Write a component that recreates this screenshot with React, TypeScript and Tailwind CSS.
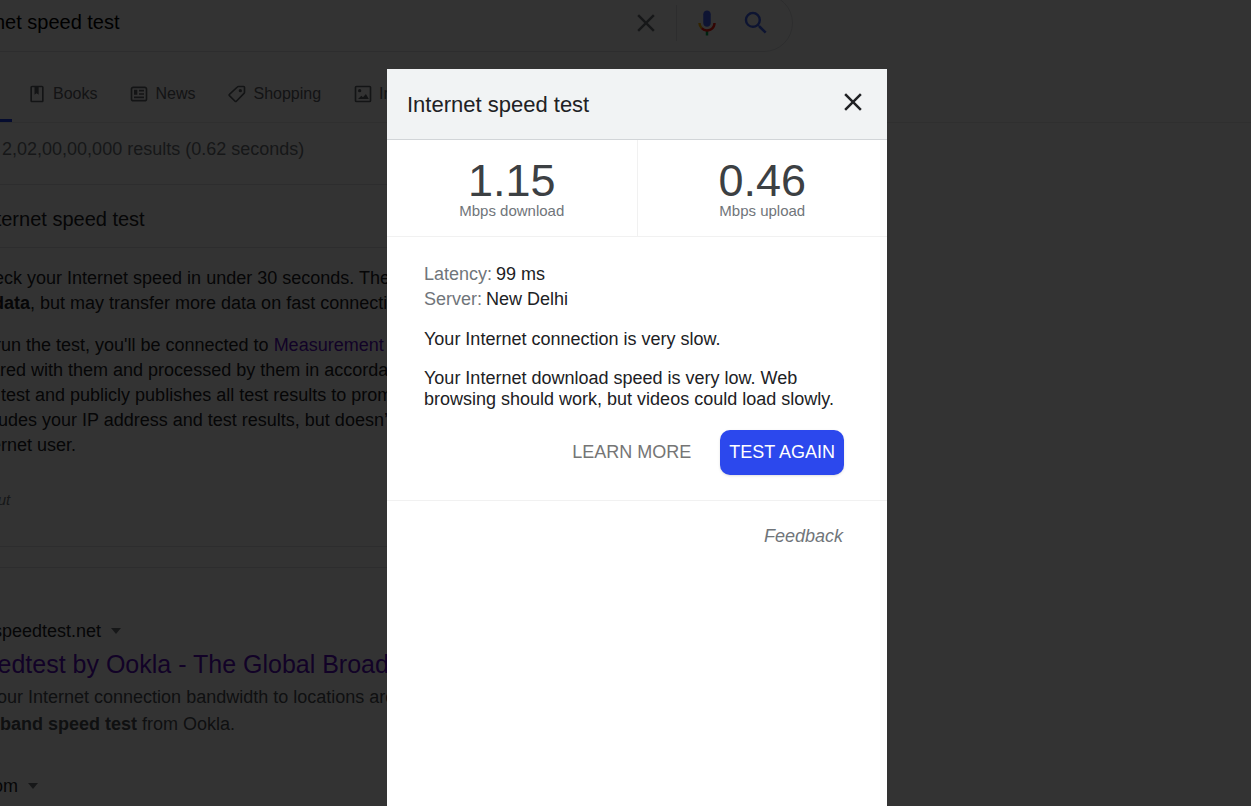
import React from 'react';

type IconProps = { className?: string };

const BookIcon = ({ className }: IconProps) => (
  <svg viewBox="0 0 24 24" fill="currentColor" className={className} aria-hidden="true">
    <path d="M18 2H6c-1.100 0-2 .9-2 2v16c0 1.100.9 2 2 2h12c1.100 0 2-.9 2-2V4c0-1.100-.9-2-2-2zm0 18H6V4h3v9l2.500-1.900L14 13V4h4v16z" />
  </svg>
);

const NewsIcon = ({ className }: IconProps) => (
  <svg viewBox="0 0 24 24" fill="currentColor" className={className} aria-hidden="true">
    <path d="M12 11h6v2h-6v-2zm-6 6h12v-2H6v2zm0-4h4V7H6v6zm16-7.220v12.440c0 1.540-1.340 2.780-3 2.780H5c-1.640 0-3-1.250-3-2.780V5.780C2 4.260 3.360 3 5 3h14c1.640 0 3 1.250 3 2.780zM19.990 12V5.780c0-.42-.46-.78-1-.78H5c-.54 0-1 .36-1 .78v12.440c0 .42.46.78 1 .78h14c.54 0 1-.36 1-.78V12zM12 9h6V7h-6v2z" />
  </svg>
);

const TagIcon = ({ className }: IconProps) => (
  <svg viewBox="0 0 24 24" fill="none" stroke="currentColor" strokeWidth="2" className={className} aria-hidden="true">
    <path d="M20 3h-6.200a2 2 0 0 0-1.400.600L2.900 12.400a1 1 0 0 0 0 1.500l6.800 6.800a1 1 0 0 0 1.500 0l9.200-9.500a2 2 0 0 0 .6-1.400V4a1 1 0 0 0-1-1z" />
    <circle cx="16" cy="8" r="2" fill="currentColor" stroke="none" />
  </svg>
);

const ImageIcon = ({ className }: IconProps) => (
  <svg viewBox="0 0 24 24" fill="currentColor" className={className} aria-hidden="true">
    <path d="M20 2H4a2 2 0 0 0-2 2v16a2 2 0 0 0 2 2h16a2 2 0 0 0 2-2V4a2 2 0 0 0-2-2zm0 18H4V4h16v16z" />
    <circle cx="8" cy="8" r="2" />
    <path d="M6 18l4-4 2 2 3.500-4L19 18z" />
  </svg>
);

const CloseIcon = ({ className }: IconProps) => (
  <svg viewBox="0 0 24 24" fill="currentColor" className={className} aria-hidden="true">
    <path d="M19 6.410L17.590 5 12 10.590 6.410 5 5 6.410 10.590 12 5 17.590 6.410 19 12 13.410 17.590 19 19 17.590 13.410 12z" />
  </svg>
);

const MicIcon = ({ className }: IconProps) => (
  <svg viewBox="0 0 24 24" className={className} aria-hidden="true">
    <path fill="#4663ff" d="M12 15c1.660 0 3-1.310 3-2.970V5c0-1.660-1.340-3-3-3S9 3.340 9 5v7.030C9 13.690 10.340 15 12 15z" />
    <path fill="#00b050" d="M11 18.080h2V22h-2z" />
    <path fill="#ffb400" d="M7.050 16.870A6.900 6.900 0 0 1 5 12h2c0 1.450.56 2.420 1.470 3.380l-1.420 1.490z" />
    <path fill="#ff1a10" d="M12 16.930a4.970 4.970 0 0 1-3.540-1.550l-1.410 1.490A6.980 6.980 0 0 0 12 19c3.870 0 6.990-2.920 6.990-7h-1.990c0 2.920-2.240 4.930-5 4.930z" />
  </svg>
);

const SearchIcon = ({ className }: IconProps) => (
  <svg viewBox="0 0 24 24" fill="currentColor" className={className} aria-hidden="true">
    <path d="M15.500 14h-.79l-.28-.27A6.470 6.470 0 0 0 16 9.500 6.500 6.500 0 1 0 9.500 16c1.610 0 3.090-.59 4.230-1.570l.27.28v.79l5 4.990L20.490 19l-4.990-5zm-6 0C7.010 14 5 11.990 5 9.500S7.010 5 9.500 5 14 7.010 14 9.500 11.990 14 9.500 14z" />
  </svg>
);

const Caret = () => (
  <svg viewBox="0 0 10 6" className="h-[6px] w-[10px] text-[#70757a]" fill="currentColor" aria-hidden="true">
    <path d="M0 0h10L5 6z" />
  </svg>
);

const tabs = [
  { label: 'Books', Icon: BookIcon },
  { label: 'News', Icon: NewsIcon },
  { label: 'Shopping', Icon: TagIcon },
  { label: 'Images', Icon: ImageIcon },
];

function SearchPage() {
  return (
    <div className="-ml-[50px] whitespace-nowrap">
      <form className="-mt-[6px] flex h-[58px] w-[843px] items-center rounded-r-full border border-[#dfe1e5] pr-[21px]" role="search">
        <input
          aria-label="Search"
          defaultValue="internet speed test"
          className="min-w-0 flex-1 bg-transparent pb-[2px] pl-1 text-[20px] text-black outline-none"
        />
        <button type="button" aria-label="Clear" className="text-[#70757a]">
          <CloseIcon className="size-[30px]" />
        </button>
        <span className="mx-[15px] h-9 border-l border-[#dfe1e5]" />
        <button type="button" aria-label="Search by voice">
          <MicIcon className="size-[30px]" />
        </button>
        <button type="submit" aria-label="Submit search" className="ml-[19px] text-[#4263f5]">
          <SearchIcon className="size-[30px]" />
        </button>
      </form>

      <nav className="mt-[19px] flex h-[52px] border-b border-[#ebebeb] text-[16px] text-[#5f6368]">
        <a href="#all" className="w-[62px] shrink-0 border-b-[3px] border-[#1a3ee8]">All</a>
        <div className="ml-[15px] flex h-[46px] items-center gap-8">
          {tabs.map(({ label, Icon }) => (
            <a key={label} href={`#${label.toLowerCase()}`} className="flex items-center gap-[6px]">
              <Icon className="size-5" />
              {label}
            </a>
          ))}
        </div>
      </nav>

      <main className="w-[800px]">
        <p className="pt-[13px] text-[18px] leading-[26px] text-[#70757a]">About 2,02,00,00,000 results (0.62 seconds)</p>

        <section className="mt-[22px] rounded-lg border border-[#dfe1e5] text-[18px] leading-[25px] text-[#202124]">
          <h2 className="border-b border-[#dfe1e5] px-7 pb-[15px] pt-[21px] text-[20px] leading-[26px]">Internet speed test</h2>
          <div className="px-5 pt-[18px]">
            <p>
              Check your Internet speed in under 30 seconds. The speed test usually transfers less than <b>40 MB</b>
              <br />
              <b>of data</b>, but may transfer more data on fast connections.
            </p>
            <p className="mt-[17px]">
              To run the test, you'll be connected to <a href="#mlab" className="text-[#5a0bc0]">Measurement Lab</a> (M-Lab) and your IP address will be
              <br />
              shared with them and processed by them in accordance with their privacy policy. M-Lab
              <br />
              the test and publicly publishes all test results to promote Internet research. Published
              <br />
              includes your IP address and test results, but doesn’t include any other information
              <br />
              Internet user.
            </p>
            <p className="mt-[29px] pb-[34px] text-[15px] italic text-[#70757a]">About</p>
          </div>
        </section>
        <hr className="mt-5 border-[#dfe1e5]" />

        <article className="pt-[50px]">
          <div className="flex items-center gap-[10px] text-[18px] leading-[26px] text-[#202124]">
            www.speedtest.net <Caret />
          </div>
          <h3 className="pl-[3px] text-[25px] leading-[40px]">
            <a href="#speedtest" className="text-[#5a0bc0]">Speedtest by Ookla - The Global Broadband Speed Test</a>
          </h3>
          <p className="text-[18px] leading-[27px] text-[#4d5156]">
            Test your Internet connection bandwidth to locations around the world with this interactive
            <br />
            <b>broadband speed test</b> from Ookla.
          </p>
        </article>
        <div className="mt-[35px] flex items-center gap-[10px] text-[18px] leading-[26px] text-[#202124]">
          fast.com <Caret />
        </div>
      </main>
    </div>
  );
}

function Metric({ value, label }: { value: string; label: string }) {
  return (
    <div className="flex-1 pt-5 text-center">
      <div className="text-[45px] leading-[41px] text-[#3c4043]">{value}</div>
      <div className="text-[15px] leading-5 text-[#70757a]">{label}</div>
    </div>
  );
}

function SpeedTestDialog() {
  return (
    <section role="dialog" aria-label="Internet speed test" className="mt-[69px] flex w-[500px] flex-col bg-white">
      <header className="flex h-[71px] items-center justify-between border-b border-[#d2d5d8] bg-[#f1f3f4] pl-5 pr-[19px]">
        <h1 className="text-[22px] text-[#202124]">Internet speed test</h1>
        <button type="button" aria-label="Close" className="mb-1 text-[#202124]">
          <CloseIcon className="size-[30px]" />
        </button>
      </header>
      <div className="flex h-[97px] divide-x divide-[#f1f1f1] border-b border-[#f1f1f1]">
        <Metric value="1.15" label="Mbps download" />
        <Metric value="0.46" label="Mbps upload" />
      </div>
      <div className="border-b border-[#f1f1f1] px-[37px] pb-[25px] pt-[25px] text-[18px] leading-[21px] text-[#202124]">
        <dl className="leading-[25px]">
          <div className="flex gap-1">
            <dt className="text-[#70757a]">Latency:</dt>
            <dd>99 ms</dd>
          </div>
          <div className="flex gap-1">
            <dt className="text-[#70757a]">Server:</dt>
            <dd>New Delhi</dd>
          </div>
        </dl>
        <p className="mt-[17px]">Your Internet connection is very slow.</p>
        <p className="mt-[18px]">Your Internet download speed is very low. Web browsing should work, but videos could load slowly.</p>
        <div className="mt-5 flex justify-end gap-5 pr-[6px]">
          <button type="button" className="h-[45px] px-[9px] text-[#757575]">LEARN MORE</button>
          <button type="button" className="h-[45px] rounded-[10px] bg-[#2c48ed] px-[9px] text-white shadow-sm">TEST AGAIN</button>
        </div>
      </div>
      <a href="#feedback" className="mr-11 mt-[25px] self-end text-[18px] leading-[21px] italic text-[#70757a]">Feedback</a>
    </section>
  );
}

export default function App() {
  return (
    <div className="relative h-screen overflow-hidden bg-white font-['Liberation_Sans',Arial,sans-serif]">
      <SearchPage />
      <div className="absolute inset-0 flex justify-center bg-black/80 pl-[23px]">
        <SpeedTestDialog />
      </div>
    </div>
  );
}
